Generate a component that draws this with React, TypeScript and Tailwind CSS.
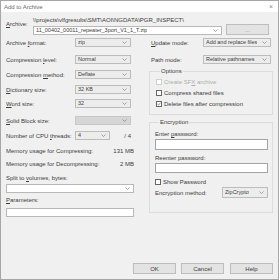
import type { ReactNode } from "react";

const Chevron = () => (
  <svg width="5" height="3" viewBox="0 0 5 3" className="shrink-0">
    <path d="M0.5 0.5 L2.5 2.5 L4.5 0.5" fill="none" stroke="#707070" strokeWidth="0.6" />
  </svg>
);

type ComboProps = {
  value?: string;
  className?: string;
  edit?: boolean;
  disabled?: boolean;
};

const Combo = ({ value = "", className = "", edit = false, disabled = false }: ComboProps) => {
  const fill = disabled
    ? "bg-[#d6d6d6] border-[#c8c8c8]"
    : edit
      ? "bg-white border-[#b8b8b8]"
      : "bg-[#ececec] border-[#bcbcbc]";
  return (
    <div className={`flex items-center justify-between border pl-[2px] pr-[3px] ${fill} ${className}`}>
      <span className="whitespace-nowrap overflow-hidden leading-none text-[5.5px]">{value}</span>
      <Chevron />
    </div>
  );
};

const Check = ({ label, checked = false, disabled = false }: { label: ReactNode; checked?: boolean; disabled?: boolean }) => (
  <div className={`flex items-center gap-[2px] h-[6px] ${disabled ? "text-[#adadad]" : ""}`}>
    <div
      className={`w-[6px] h-[6px] border bg-white flex items-center justify-center ${
        disabled ? "border-[#d0d0d0]" : "border-[#666]"
      }`}
    >
      {checked && (
        <svg width="4" height="4" viewBox="0 0 4 4">
          <path d="M0.4 2 L1.5 3.1 L3.6 0.7" fill="none" stroke="#444" strokeWidth="0.6" />
        </svg>
      )}
    </div>
    <span className="leading-none">{label}</span>
  </div>
);

const Row = ({ label, children, className = "" }: { label: ReactNode; children: ReactNode; className?: string }) => (
  <div className={`flex items-center h-[9px] ${className}`}>
    <span className="w-[69px] shrink-0 leading-none">{label}</span>
    {children}
  </div>
);

const Group = ({ title, children, className = "" }: { title: string; children: ReactNode; className?: string }) => (
  <div className={`border border-[#dcdcdc] flex flex-col ${className}`}>
    <span className="-mt-[4px] ml-[4px] px-[1px] h-[6px] leading-[6px] self-start bg-[#f0f0f0]">{title}</span>
    {children}
  </div>
);

const Button = ({ children, className = "" }: { children: ReactNode; className?: string }) => (
  <div
    className={`h-[11px] w-[43px] border border-[#bdbdbd] bg-[#e3e3e3] flex items-center justify-center leading-none ${className}`}
  >
    {children}
  </div>
);

export default function App() {
  return (
    <div className="w-[279px] h-[280px] bg-[#f0f0f0] border border-[#a6a6a6] flex flex-col overflow-hidden font-['Liberation_Sans',Arial,sans-serif] text-[6px] text-[#3c3c3c]">
      <div className="h-[11px] shrink-0 bg-white flex items-center justify-between pl-[3px] pr-[5px]">
        <span className="text-[#6a6a6a] leading-none">Add to Archive</span>
        <span className="text-[#888] text-[7px] leading-none">×</span>
      </div>

      <div className="flex-1 flex flex-col px-[5px]">
        <div className="flex mt-[5px]">
          <span className="w-[27px] shrink-0 pt-[4px] leading-none">
            <u>A</u>rchive:
          </span>
          <div className="flex flex-col flex-1">
            <span className="h-[6px] leading-[6px] whitespace-nowrap">
              \\projects\vlfgresults\SMT\AOI\NGDATA\PGR_INSPECT\
            </span>
            <div className="flex items-end gap-[4px] mt-[1px] pr-[4px]">
              <Combo edit value="11_00402_00011_repeater_3port_V1_1_T.zip" className="h-[9px] flex-1" />
              <Button className="w-[10px] h-[11px] text-[#888]">...</Button>
            </div>
          </div>
        </div>

        <div className="flex gap-[15px] mt-[3px]">
          <div className="w-[128px] flex flex-col">
            <Row label={<>Archive <u>f</u>ormat:</>}>
              <Combo value="zip" className="h-[9px] w-[56px]" />
            </Row>
            <Row label={<>Compression <u>l</u>evel:</>} className="mt-[8px]">
              <Combo value="Normal" className="h-[9px] w-[56px]" />
            </Row>
            <Row label={<>Compression <u>m</u>ethod:</>} className="mt-[6px]">
              <Combo value="Deflate" className="h-[9px] w-[56px]" />
            </Row>
            <Row label={<><u>D</u>ictionary size:</>} className="mt-[6px]">
              <Combo value="32 KB" className="h-[9px] w-[56px]" />
            </Row>
            <Row label={<><u>W</u>ord size:</>} className="mt-[5px]">
              <Combo value="32" className="h-[9px] w-[56px]" />
            </Row>
            <Row label={<><u>S</u>olid Block size:</>} className="mt-[8px]">
              <Combo disabled className="h-[9px] w-[56px]" />
            </Row>
            <Row label={<>Number of CPU <u>t</u>hreads:</>} className="mt-[6px]">
              <Combo value="4" className="h-[9px] w-[35px]" />
              <span className="ml-auto mr-[3px] leading-none">/ 4</span>
            </Row>

            <div className="flex justify-between mt-[8px] h-[6px] leading-[6px]">
              <span>Memory usage for Compressing:</span>
              <span>131 MB</span>
            </div>
            <div className="flex justify-between mt-[7px] h-[6px] leading-[6px]">
              <span>Memory usage for Decompressing:</span>
              <span>2 MB</span>
            </div>

            <span className="mt-[8px] h-[6px] leading-[6px]">
              Split to <u>v</u>olumes, bytes:
            </span>
            <Combo edit className="h-[9px] mt-[3px]" />

            <span className="mt-[4px] h-[6px] leading-[6px]">
              <u>P</u>arameters:
            </span>
            <div className="h-[9px] mt-[5px] bg-white border border-[#b8b8b8]" />
          </div>

          <div className="w-[124px] flex flex-col">
            <div className="flex items-center h-[9px] pl-[2px]">
              <span className="w-[52px] shrink-0 leading-none">
                <u>U</u>pdate mode:
              </span>
              <Combo value="Add and replace files" className="h-[9px] w-[68px]" />
            </div>
            <div className="flex items-center h-[9px] pl-[2px] mt-[8px]">
              <span className="w-[52px] shrink-0 leading-none">Path mode:</span>
              <Combo value="Relative pathnames" className="h-[9px] w-[68px]" />
            </div>

            <Group title="Options" className="mt-[7px] h-[44px] pl-[6px]">
              <div className="flex flex-col gap-[5px] mt-[5px]">
                <Check disabled label={<>Create SF<u>X</u> archive</>} />
                <Check label="Compress shared files" />
                <Check checked label="Delete files after compression" />
              </div>
            </Group>

            <Group title="Encryption" className="mt-[7px] h-[91px] pl-[5px] pr-[4px]">
              <span className="mt-[6px] h-[6px] leading-[6px]">
                Enter <u>p</u>assword:
              </span>
              <div className="h-[11px] mt-[2px] bg-white border border-[#a4a4a4]" />
              <span className="mt-[5px] h-[6px] leading-[6px]">Reenter password:</span>
              <div className="h-[10px] mt-[2px] bg-white border border-[#a4a4a4]" />
              <div className="mt-[6px]">
                <Check label="Show Password" />
              </div>
              <div className="flex items-center justify-between h-[11px] mt-[2px]">
                <span className="leading-none">Encryption method:</span>
                <Combo value="ZipCrypto" className="h-[11px] w-[46px]" />
              </div>
            </Group>
          </div>
        </div>

        <div className="mt-auto mb-[5px] flex justify-end">
          <Button>OK</Button>
          <Button className="ml-[5px]">Cancel</Button>
          <Button className="ml-[6px] w-[42px]">Help</Button>
        </div>
      </div>
    </div>
  );
}
